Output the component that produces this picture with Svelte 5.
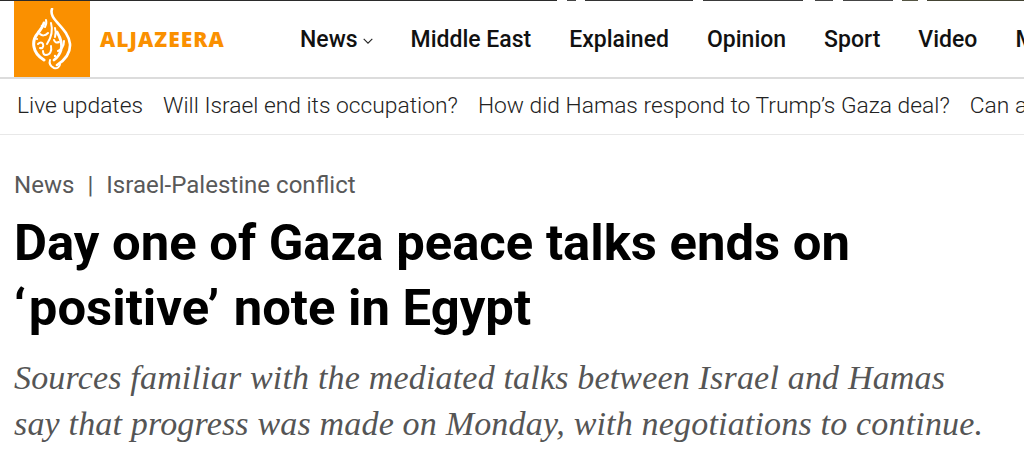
<script>
  const nav = ['Middle East', 'Explained', 'Opinion', 'Sport', 'Video', 'More'];
  const links = ['Live updates', 'Will Israel end its occupation?', 'How did Hamas respond to Trump’s Gaza deal?', 'Can a deal end the war?'];
</script>

<div class="page">
  <div class="strip"></div>
  <header class="head">
    <div class="logo">
      <svg width="40" height="62" viewBox="0 0 40 62" fill="none" stroke="#fff" stroke-linecap="round" stroke-linejoin="round">
        <path d="M20 1c-1.500 4 .5 8 4 12 5 6 13 13 14 23 .6 9-5 16-13 21" stroke-width="2.600"/>
        <path d="M25 24c3 5 6 11 4 18-1 4-3 7-7 10" stroke-width="2.800"/>
        <path d="M12 15c-1 4-3 6-6 10-3.500 4-5 9-4 14 1 6 5 10 10 13" stroke-width="3"/>
        <path d="M14 12c1 3 0 5-1 7M19 15c2 7 0 15-4 21M8 26c2 2 5 2 8-1M6 36c2-2 4-2 5 0 1 3-1 5-3 4M19 38c1 5-1 9-5 9-2 0-3-2-3-4M32 33c0 5-2 8-6 10M22 32c1 3 3 3 5 2M18 52c-1 3 0 6 4 8 3 1 6-1 6-4M23 20c1 3 1 6 0 9" stroke-width="2"/>
        <circle cx="10" cy="18" r="1.300" fill="#fff" stroke="none"/>
        <circle cx="5" cy="31" r="1.100" fill="#fff" stroke="none"/>
        <circle cx="23" cy="48" r="1.200" fill="#fff" stroke="none"/>
      </svg>
    </div>
    <span class="brand">ALJAZEERA</span>
    <nav class="nav">
      <span class="item news">News<svg width="10" height="6" viewBox="0 0 10 6" fill="none" stroke="#222" stroke-width="1.100"><path d="M.7 .8l4.300 4.300 4.300-4.300"/></svg></span>
      {#each nav as n}<span class="item">{n}</span>{/each}
    </nav>
  </header>
  <div class="sub">
    {#each links as l}<span>{l}</span>{/each}
  </div>
  <main class="art">
    <div class="crumb"><span>News</span><span class="sep">|</span><span>Israel-Palestine conflict</span></div>
    <h1>Day one of Gaza peace talks ends on <span class="open">‘</span>positive<span class="close">’</span> note in Egypt</h1>
    <p>Sources familiar with the mediated talks between Israel and Hamas say that progress was made on Monday, with negotiations to continue.</p>
  </main>
</div>

<style>
  :global(body) { margin: 0; background: #fff; overflow: hidden; }
  .page { width: 1024px; height: 469px; overflow: hidden; font-family: Roboto, sans-serif; color: #000; }
  .strip {
    height: 1px;
    background: linear-gradient(90deg, #2b2b2b 0 557px, #fff 557px 567px, #444 567px 576px, #fff 576px 585px, #333 585px 693px, #fff 693px 703px, #3a3a3a 703px 803px, #fff 803px 815px, #444 815px 833px, #fff 833px 843px, #444 843px 893px, #fff 893px 902px, #554 902px 918px, #fff 918px 927px, #443 927px);
  }
  .head { height: 76px; display: flex; align-items: center; padding-left: 14px; border-bottom: 2px solid #dcdcdc; white-space: nowrap; }
  .logo { width: 76px; height: 76px; background: #fa9000; display: flex; align-items: center; justify-content: center; flex: none; }
  .brand { margin-left: 10px; font: 800 21px "Open Sans", sans-serif; letter-spacing: 1.050px; color: #fa9000; width: 200px; flex: none; }
  .nav { display: flex; gap: 38px; font-size: 23px; font-weight: 500; color: #111; }
  .news svg { margin-left: 5px; vertical-align: 3px; }
  .sub { height: 53px; padding-bottom: 2px; display: flex; align-items: center; gap: 20px; padding-left: 17px; font-size: 22.800px; font-weight: 300; color: #222; border-bottom: 1px solid #e8e8e8; white-space: nowrap; }
  .art { padding: 0 14px; }
  .crumb { margin-top: 36px; font-size: 24.050px; color: #595959; line-height: 28px; display: flex; gap: 13px; }
  h1 { margin: 11px 0 0; font-size: 50.800px; line-height: 65px; font-weight: 700; width: 900px; }
  .open { margin-right: 3px; }
  .close { margin-right: 2px; }
  p { margin: 15px 0 0; font: italic 400 34px/46px "Liberation Serif", serif; letter-spacing: .18px; color: #555; width: 975px; }
</style>
